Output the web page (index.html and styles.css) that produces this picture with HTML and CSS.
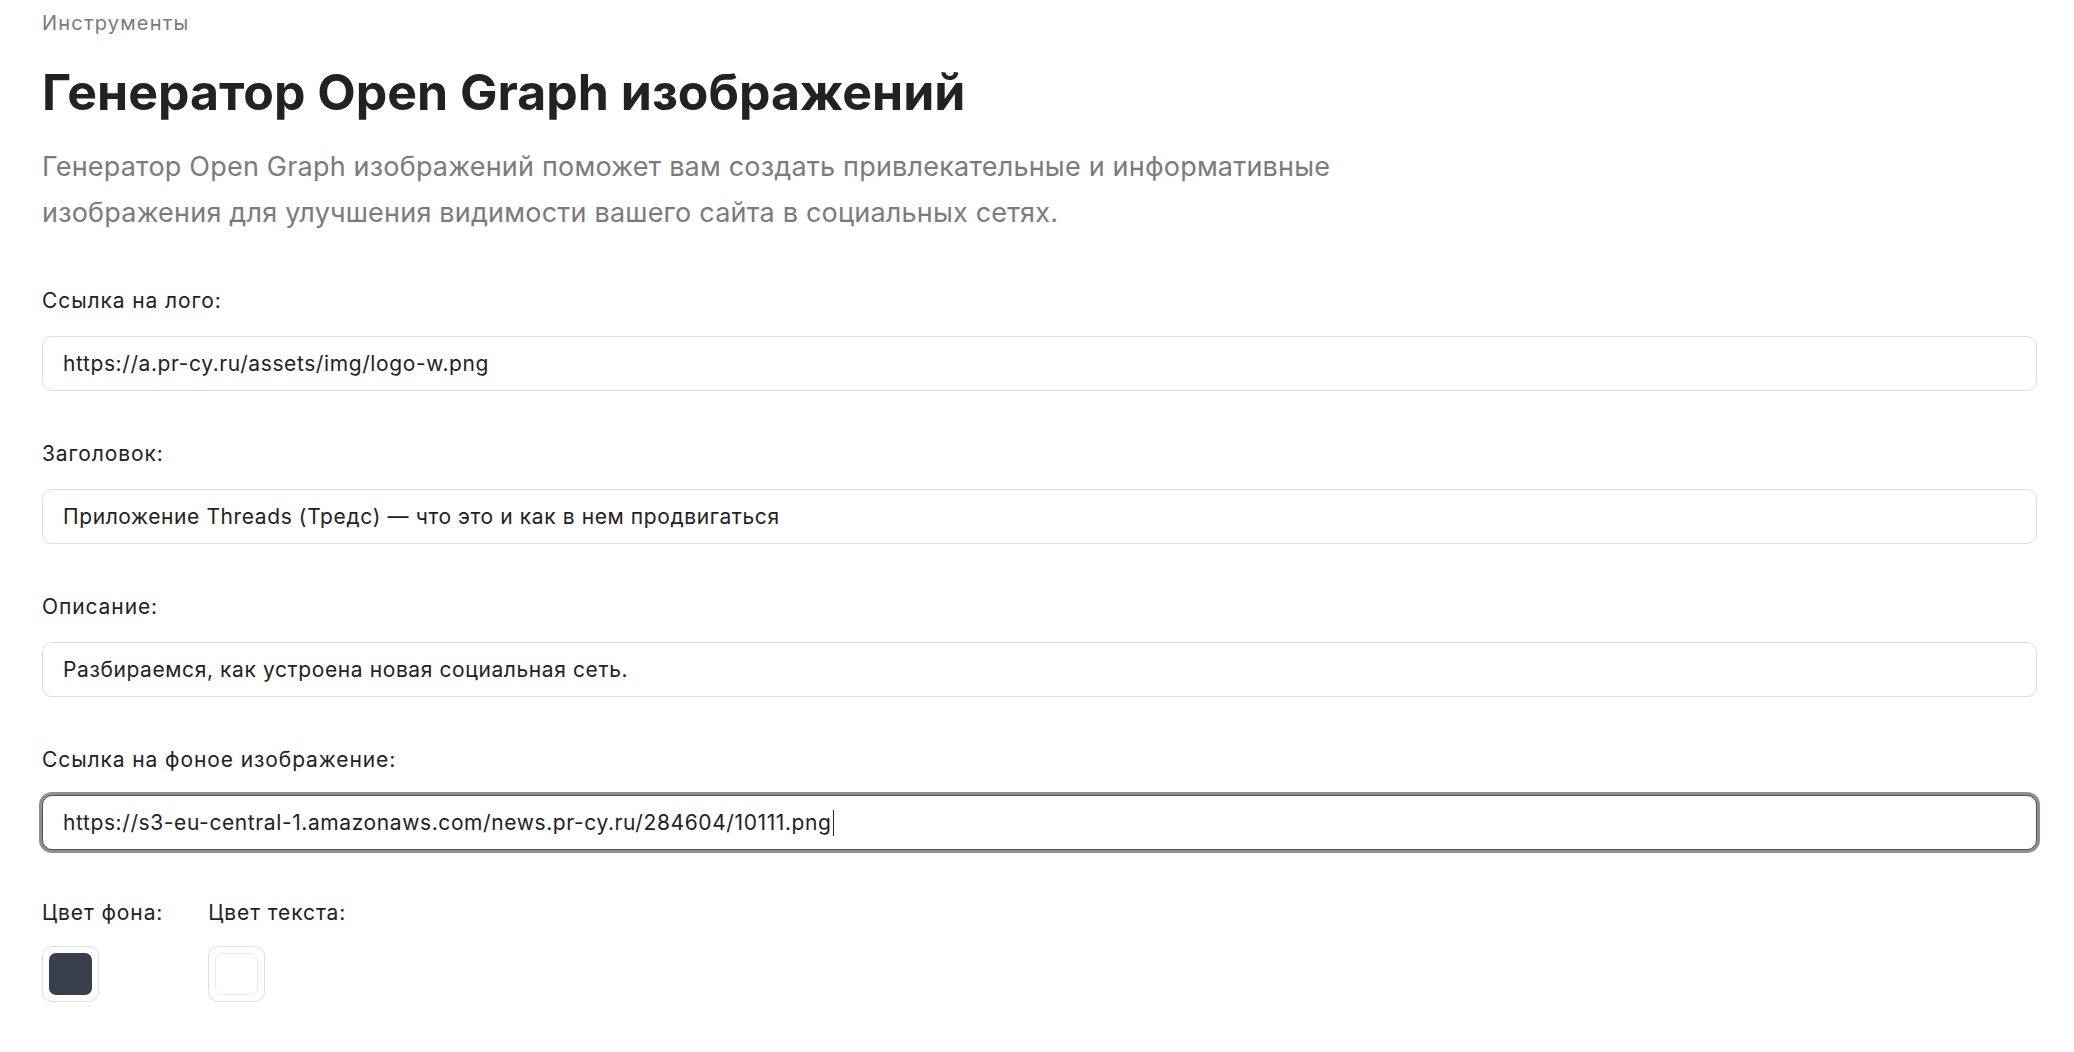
FILE: index.html
```html
<!DOCTYPE html>
<html lang="ru">
<head>
<meta charset="utf-8">
<title>Генератор Open Graph изображений</title>
<link rel="stylesheet" href="styles.css">
</head>
<body>
<main class="page">
  <div class="crumb">Инструменты</div>
  <h1 class="title">Генератор Open Graph изображений</h1>
  <p class="lead">Генератор Open Graph изображений поможет вам создать привлекательные и информативные изображения для улучшения видимости вашего сайта в социальных сетях.</p>

  <div class="field">
    <label class="label">Ссылка на лого:</label>
    <div class="input">https://a.pr-cy.ru/assets/img/logo-w.png</div>
  </div>
  <div class="field">
    <label class="label">Заголовок:</label>
    <div class="input">Приложение Threads (Тредс) — что это и как в нем продвигаться</div>
  </div>
  <div class="field">
    <label class="label">Описание:</label>
    <div class="input">Разбираемся, как устроена новая социальная сеть.</div>
  </div>
  <div class="field">
    <label class="label">Ссылка на фоное изображение:</label>
    <div class="input focused">https://s3-eu-central-1.amazonaws.com/news.pr-cy.ru/284604/10111.png<span class="caret"></span></div>
  </div>

  <div class="colors">
    <div class="color-field">
      <label class="label">Цвет фона:</label>
      <div class="swatch"><div class="swatch-fill dark"></div></div>
    </div>
    <div class="color-field">
      <label class="label">Цвет текста:</label>
      <div class="swatch"><div class="swatch-fill light"></div></div>
    </div>
  </div>
</main>
</body>
</html>
```

FILE: styles.css
```css
* { box-sizing: border-box; }
html, body { margin: 0; padding: 0; background: #fff; }
body {
  font-family: Inter, "Liberation Sans", Arial, sans-serif;
  color: #212529;
}
.page {
  padding: 10px 37px 40px 42px;
}
.crumb {
  font-size: 20px;
  line-height: 27px;
  letter-spacing: 1.2px;
  color: #7a7a7a;
}
.title {
  margin: 25px 0 0;
  font-size: 50px;
  line-height: 60px;
  font-weight: 700;
  color: #222;
}
.lead {
  margin: 22px 0 0;
  max-width: 1400px;
  font-size: 27px;
  line-height: 46px;
  letter-spacing: 0.2px;
  color: #7b7b7b;
}
.field {
  margin-top: 50px;
}
.label {
  display: block;
  font-size: 21px;
  line-height: 30px;
  letter-spacing: 0.9px;
  color: #222;
}
.input {
  margin-top: 20px;
  height: 55px;
  display: flex;
  align-items: center;
  padding: 0 20px;
  border: 1px solid #dcdcdc;
  border-radius: 10px;
  font-size: 21px;
  letter-spacing: 0.6px;
  color: #222;
  background: #fff;
}
.field + .field { margin-top: 48px; }
.input.focused {
  border: 1px solid #4f5357;
  box-shadow: 0 0 0 3px #8c9095;
}
.caret {
  display: inline-block;
  width: 1px;
  height: 26px;
  background: #222;
  margin-left: 1px;
}
.colors {
  display: flex;
  gap: 45px;
  margin-top: 48px;
}
.color-field .label { margin-bottom: 18px; }
.swatch {
  width: 57px;
  height: 56px;
  padding: 6px;
  border: 1px solid #dedede;
  border-radius: 10px;
  background: #fff;
}
.swatch-fill {
  width: 100%;
  height: 100%;
  border-radius: 7px;
}
.swatch-fill.dark { background: #38404d; }
.swatch-fill.light { background: #fff; border: 1px solid #ececec; }
```
